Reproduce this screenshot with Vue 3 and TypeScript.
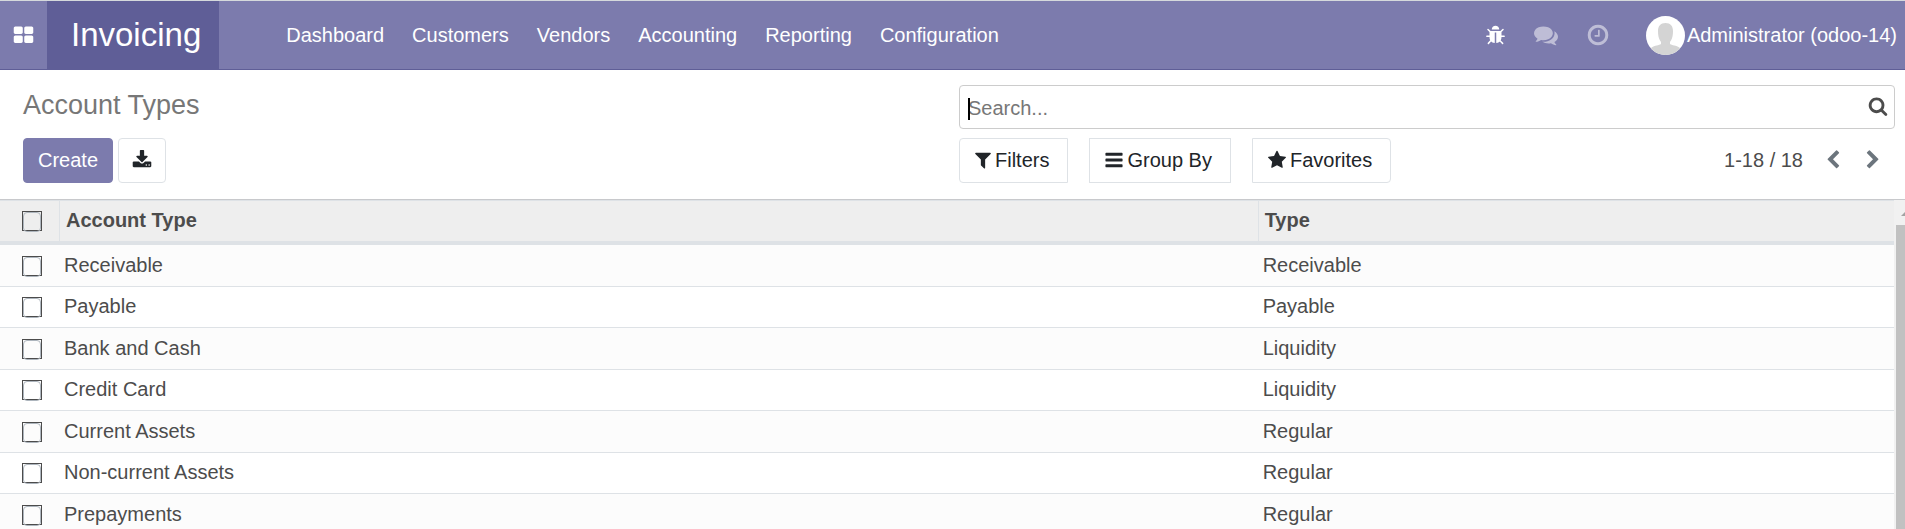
<script setup lang="ts">
import { ref, computed } from 'vue'

interface AccountType {
  id: number
  name: string
  type: string
}

const menus: string[] = ['Dashboard', 'Customers', 'Vendors', 'Accounting', 'Reporting', 'Configuration']

const records: AccountType[] = [
  { id: 1, name: 'Receivable', type: 'Receivable' },
  { id: 2, name: 'Payable', type: 'Payable' },
  { id: 3, name: 'Bank and Cash', type: 'Liquidity' },
  { id: 4, name: 'Credit Card', type: 'Liquidity' },
  { id: 5, name: 'Current Assets', type: 'Regular' },
  { id: 6, name: 'Non-current Assets', type: 'Regular' },
  { id: 7, name: 'Prepayments', type: 'Regular' },
]

const query = ref('')
const selected = ref<number[]>([])
const allSelected = computed({
  get: () => selected.value.length === records.length,
  set: (on: boolean) => {
    selected.value = on ? records.map((r) => r.id) : []
  },
})
</script>

<template>
  <div class="client">
    <header class="navbar">
      <button class="apps" type="button" aria-label="Applications">
        <svg class="icon icon-md" viewBox="0 0 1792 1792"><path d="M832 1024v384q0 52-38 90t-90 38h-512q-52 0-90-38t-38-90v-384q0-52 38-90t90-38h512q52 0 90 38t38 90zm0-768v384q0 52-38 90t-90 38h-512q-52 0-90-38t-38-90v-384q0-52 38-90t90-38h512q52 0 90 38t38 90zm896 768v384q0 52-38 90t-90 38h-512q-52 0-90-38t-38-90v-384q0-52 38-90t90-38h512q52 0 90 38t38 90zm0-768v384q0 52-38 90t-90 38h-512q-52 0-90-38t-38-90v-384q0-52 38-90t90-38h512q52 0 90 38t38 90z" /></svg>
      </button>
      <a class="brand" href="#">Invoicing</a>
      <nav class="menu">
        <a v-for="item in menus" :key="item" href="#">{{ item }}</a>
      </nav>
      <div class="systray">
        <button class="tray" type="button" aria-label="Open developer tools">
          <svg class="icon icon-md" viewBox="0 0 1792 1792"><path d="M1696 960q0 26-19 45t-45 19h-224q0 171-67 290l208 209q19 19 19 45t-19 45q-18 19-45 19t-45-19l-198-197q-5 5-15 13t-42 28.5-65 36.5-82 29-97 13v-896h-128v896q-51 0-101.5-13.5t-87-33-66-39-43.5-32.5l-15-14-183 207q-20 21-48 21-24 0-43-16-19-18-20.5-44.5t15.5-46.5l202-227q-58-114-58-274h-224q-26 0-45-19t-19-45 19-45 45-19h224v-294l-173-173q-19-19-19-45t19-45 45-19 45 19l173 173h844l173-173q19-19 45-19t45 19 19 45-19 45l-173 173v294h224q26 0 45 19t19 45zm-480-576h-640q0-133 93.5-226.5t226.5-93.5 226.5 93.5 93.5 226.5z" /></svg>
        </button>
        <button class="tray dim" type="button" aria-label="Conversations">
          <svg class="icon icon-lg" viewBox="0 0 1792 1792"><path d="M1408 768q0 139-94 257t-256.500 186.500-353.500 68.500q-86 0-176-16-124 88-278 128-36 9-86 16h-3q-11 0-20.500-8t-11.500-21q-1-3-1-6.500t.5-6.500 2-6l2.500-5 3.500-5.500 4-5 4.500-5 4-4.500q5-6 23-25t26-29.500 22.500-29 25-38.500 20.500-44q-124-72-195-177t-71-224q0-139 94-257t256.500-186.500 353.500-68.500 353.500 68.500 256.500 186.500 94 257zm384 256q0 120-71 224.500t-195 176.500q10 24 20.500 44t25 38.500 22.500 29 26 29.500 23 25q1 1 4 4.500t4.500 5 4 5 3.500 5.500l2.500 5 2 6 .5 6.500-1 6.500q-3 14-13 22t-22 7q-50-7-86-16-154-40-278-128-90 16-176 16-271 0-472-132 58 4 88 4 161 0 309-45t264-129q125-92 192-212t67-254q0-77-23-152 129 71 204 178t75 230z" /></svg>
        </button>
        <button class="tray dim" type="button" aria-label="Activities">
          <svg class="icon icon-lg" viewBox="0 0 1792 1792"><path d="M1024 544v448q0 14-9 23t-23 9h-320q-14 0-23-9t-9-23v-64q0-14 9-23t23-9h224v-352q0-14 9-23t23-9h64q14 0 23 9t9 23zm416 352q0-148-73-273t-198-198-273-73-273 73-198 198-73 273 73 273 198 198 273 73 273-73 198-198 73-273zm224 0q0 209-103 385.500t-279.500 279.500-385.500 103-385.500-103-279.500-279.500-103-385.500 103-385.500 279.500-279.500 385.500-103 385.500 103 279.500 279.500 103 385.500z" /></svg>
        </button>
        <button class="user" type="button">
          <svg class="avatar" viewBox="0 0 39 39">
            <defs><clipPath id="avatar-clip"><circle cx="19.500" cy="19.500" r="19.500" /></clipPath></defs>
            <g clip-path="url(#avatar-clip)">
              <rect width="39" height="39" fill="#fff" />
              <path fill="#d4d4d4" d="M19.500 7c-5 0-7.500 3-7.500 8 0 4 .5 7 2 9.500 1.200 2 3.200 3.500 5.500 3.500s4.300-1.500 5.500-3.500c1.500-2.500 2-5.500 2-9.500 0-5-2.500-8-7.500-8z" />
              <path fill="#d4d4d4" d="M15 25v3c-2 1.500-6 1-10 4v8h29v-8c-4-3-8-2.500-10-4v-3z" />
            </g>
          </svg>
          <span>Administrator (odoo-14)</span>
        </button>
      </div>
    </header>

    <section class="panel">
      <div class="side">
        <h1>Account Types</h1>
        <div class="actions">
          <button class="btn primary" type="button">Create</button>
          <button class="btn export" type="button" aria-label="Export all">
            <svg class="icon icon-sm" viewBox="0 0 1792 1792"><path d="M1344 1344q0-26-19-45t-45-19-45 19-19 45 19 45 45 19 45-19 19-45zm256 0q0-26-19-45t-45-19-45 19-19 45 19 45 45 19 45-19 19-45zm128-224v320q0 40-28 68t-68 28h-1472q-40 0-68-28t-28-68v-320q0-40 28-68t68-28h465l135 136q58 56 136 56t136-56l136-136h464q40 0 68 28t28 68zm-325-569q17 41-14 70l-448 448q-18 19-45 19t-45-19l-448-448q-31-29-14-70 17-39 59-39h256v-448q0-26 19-45t45-19h256q26 0 45 19t19 45v448h256q42 0 59 39z" /></svg>
          </button>
        </div>
      </div>
      <div class="side">
        <div class="search">
          <span class="caret"></span>
          <input v-model="query" type="text" placeholder="Search..." aria-label="Search" />
          <button type="button" aria-label="Run search">
            <svg class="icon icon-sm" viewBox="0 0 1792 1792"><path d="M1216 832q0-185-131.500-316.500t-316.500-131.500-316.500 131.500-131.500 316.500 131.500 316.500 316.500 131.500 316.500-131.500 131.500-316.500zm512 832q0 52-38 90t-90 38q-54 0-90-38l-343-342q-179 124-399 124-143 0-273.500-55.500t-225-150-150-225-55.500-273.500 55.500-273.500 150-225 225-150 273.500-55.500 273.500 55.500 225 150 150 225 55.500 273.500q0 220-124 399l343 343q37 37 37 90z" /></svg>
          </button>
        </div>
        <div class="tools">
          <div class="filters">
            <button class="btn first" type="button">
              <svg class="icon icon-funnel" viewBox="192 0 1408 1792"><path d="M1595 295q17 41-14 70l-493 493v742q0 42-39 59-13 5-25 5-27 0-45-19l-256-256q-19-19-19-45v-486l-493-493q-31-29-14-70 17-39 59-39h1280q42 0 59 39z" /></svg>
              Filters
            </button>
            <button class="btn middle" type="button">
              <svg class="icon icon-tight" viewBox="128 0 1536 1792"><path d="M1664 1344v128q0 26-19 45t-45 19h-1408q-26 0-45-19t-19-45v-128q0-26 19-45t45-19h1408q26 0 45 19t19 45zm0-512v128q0 26-19 45t-45 19h-1408q-26 0-45-19t-19-45v-128q0-26 19-45t45-19h1408q26 0 45 19t19 45zm0-512v128q0 26-19 45t-45 19h-1408q-26 0-45-19t-19-45v-128q0-26 19-45t45-19h1408q26 0 45 19t19 45z" /></svg>
              Group By
            </button>
            <button class="btn last" type="button">
              <svg class="icon icon-tight" viewBox="64 0 1664 1792"><path d="M1728 647q0 22-26 48l-363 354 86 500q1 7 1 20 0 21-10.500 35.500t-30.500 14.500q-19 0-40-12l-449-236-449 236q-22 12-40 12-21 0-31.500-14.500t-10.500-35.500q0-6 2-20l86-500-364-354q-25-27-25-48 0-37 56-46l502-73 225-455q19-41 49-41t49 41l225 455 502 73q56 9 56 46z" /></svg>
              Favorites
            </button>
          </div>
          <div class="pager">
            <span>1-18 / 18</span>
            <button type="button" aria-label="Previous">
              <svg class="icon icon-sm" viewBox="0 0 1792 1792"><path d="M1427 301l-531 531 531 531q19 19 19 45t-19 45l-166 166q-19 19-45 19t-45-19l-742-742q-19-19-19-45t19-45l742-742q19-19 45-19t45 19l166 166q19 19 19 45t-19 45z" /></svg>
            </button>
            <button type="button" aria-label="Next">
              <svg class="icon icon-sm" viewBox="0 0 1792 1792"><path d="M1363 877l-742 742q-19 19-45 19t-45-19l-166-166q-19-19-19-45t19-45l531-531-531-531q-19-19-19-45t19-45l166-166q19-19 45-19t45 19l742 742q19 19 19 45t-19 45z" /></svg>
            </button>
          </div>
        </div>
      </div>
    </section>

    <main class="content">
      <div class="list">
        <table>
          <thead>
            <tr>
              <th class="pick"><input v-model="allSelected" type="checkbox" aria-label="Select all" /></th>
              <th>Account Type</th>
              <th class="kind">Type</th>
            </tr>
          </thead>
          <tbody>
            <tr v-for="record in records" :key="record.id">
              <td class="pick"><input v-model="selected" type="checkbox" :value="record.id" :aria-label="'Select ' + record.name" /></td>
              <td>{{ record.name }}</td>
              <td>{{ record.type }}</td>
            </tr>
          </tbody>
        </table>
      </div>
      <div class="scrollbar" aria-hidden="true">
        <svg class="arrow" viewBox="0 0 8 4"><path d="M0 4L4 0L8 4z" /></svg>
        <div class="thumb"></div>
      </div>
    </main>
  </div>
</template>

<style>
body {
  margin: 0;
  overflow: hidden;
}
</style>

<style scoped>
.client {
  display: flex;
  flex-direction: column;
  height: 100vh;
  overflow: hidden;
  background: #fff;
  color: #4c4c4c;
  font-family: "Liberation Sans", Arial, sans-serif;
  font-size: 20px;
  line-height: 30px;
}
* {
  box-sizing: border-box;
}
button,
input {
  font: inherit;
  color: inherit;
}
button {
  display: flex;
  align-items: center;
  padding: 0;
  border: 0;
  background: none;
  cursor: pointer;
}
a {
  color: inherit;
  text-decoration: none;
}
.icon {
  display: block;
  flex: none;
  fill: currentColor;
}
.icon-sm {
  width: 20px;
  height: 20px;
}
.icon-md {
  width: 21px;
  height: 21px;
}
.icon-lg {
  width: 24px;
  height: 24px;
}
.icon-funnel {
  width: 16px;
  height: 20px;
}
.icon-tight {
  width: 18px;
  height: 20px;
}

.navbar {
  display: flex;
  flex: none;
  height: 70px;
  border-top: 1px solid #d5d9dc;
  border-bottom: 1px solid #5f5e97;
  background: #7c7bad;
  color: #fff;
}
.apps {
  justify-content: center;
  width: 47px;
}
.brand {
  display: flex;
  align-items: center;
  padding: 0 18px 0 24px;
  background: #5f5e97;
  font-size: 33px;
}
.menu {
  display: flex;
  align-items: center;
  gap: 28px;
  margin-left: 67px;
}
.systray {
  display: flex;
  align-items: center;
  gap: 28px;
  margin-left: auto;
  padding-right: 8px;
}
.dim {
  opacity: 0.5;
}
.user {
  gap: 2px;
  margin-left: 8px;
}
.avatar {
  width: 39px;
  height: 39px;
}

.panel {
  display: grid;
  grid-template-columns: 1fr 1fr;
  flex: none;
  padding: 15px 10px 16px 23px;
  border-bottom: 1px solid #c8c9cc;
}
h1 {
  height: 44px;
  margin: 0 0 9px;
  color: #777;
  font-size: 27px;
  font-weight: 400;
  line-height: 40px;
}
.actions {
  display: flex;
  gap: 5px;
}
.btn {
  gap: 4px;
  height: 45px;
  padding: 0 15px 2px;
  border: 1px solid #dee2e6;
  background: #fff;
  color: #212529;
}
.primary {
  padding: 0 14px 2px;
  border-color: #7c7bad;
  border-radius: 4px;
  background: #7c7bad;
  color: #fff;
}
.export {
  justify-content: center;
  width: 48px;
  padding: 0 0 2px;
  border-radius: 4px;
}
.search {
  position: relative;
  display: flex;
  align-items: center;
  height: 44px;
  margin-bottom: 9px;
  padding: 0 6px 0 8px;
  border: 1px solid #ccc;
  border-radius: 4px;
}
.search input {
  flex: 1;
  min-width: 0;
  padding: 2px 0 0;
  border: 0;
  outline: 0;
  background: none;
}
.search button {
  padding-bottom: 2px;
}
.search input::placeholder {
  color: #777;
  opacity: 1;
}
.caret {
  position: absolute;
  top: 12px;
  left: 8px;
  width: 2px;
  height: 22px;
  background: #000;
}
.tools {
  display: flex;
  justify-content: space-between;
}
.filters {
  display: flex;
  gap: 21px;
}
.filters .btn {
  padding-right: 18px;
}
.first {
  border-radius: 4px 0 0 4px;
}
.last {
  border-radius: 0 4px 4px 0;
}
.pager {
  display: flex;
  align-items: center;
  gap: 20px;
  padding: 0 12px 2px 0;
}
.pager button {
  color: #6c757d;
}

.content {
  display: flex;
  flex: 1;
  min-height: 0;
}
.list {
  flex: 1;
  overflow: hidden;
  border-top: 1px solid #dee2e6;
}
table {
  width: 100%;
  border-collapse: separate;
  border-spacing: 0;
  table-layout: fixed;
}
th {
  height: 44px;
  padding: 0 6px 2px;
  border-bottom: 4px solid #dee2e6;
  border-left: 1px solid #dee2e6;
  background: #eee;
  text-align: left;
}
.kind {
  width: 33.6%;
}
td {
  height: 42px;
  padding: 0 5px 2px;
  border-bottom: 1px solid #dee2e6;
}
th.pick,
td.pick {
  width: 59px;
  padding: 0 0 0 22px;
  border-left: 0;
}
tbody tr:nth-child(odd) {
  background: #fcfcfc;
}
tbody tr:nth-child(even) td {
  height: 41px;
}
input[type="checkbox"] {
  display: block;
  width: 20px;
  height: 20px;
  margin: 0;
  border: 1px solid #4c4c4c;
  border-radius: 0;
  background: transparent;
  appearance: none;
}
input[type="checkbox"]::before {
  display: block;
  height: 18px;
  border: 1px solid #adb5bd;
  border-radius: 4px;
  content: "";
}
input[type="checkbox"]:checked::before {
  background: #7c7bad;
}
.scrollbar {
  display: flex;
  flex-direction: column;
  flex: none;
  width: 11px;
  padding-left: 2px;
  overflow: hidden;
  background: #f1f1f1;
}
.arrow {
  flex: none;
  align-self: flex-start;
  width: 8px;
  height: 4px;
  margin: 12px 0 9px 5px;
  fill: #a3a3a3;
}
.thumb {
  flex: 1;
  background: #c1c1c1;
}
</style>
